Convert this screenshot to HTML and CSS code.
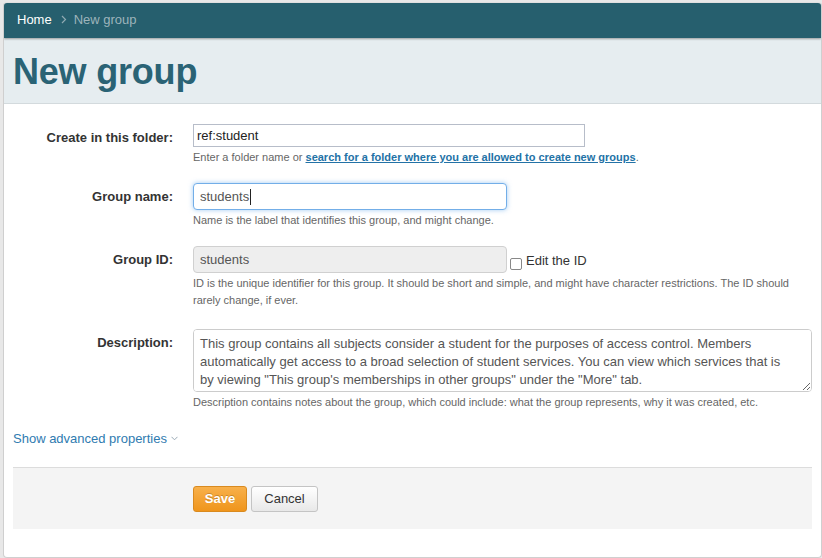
FILE: index.html
```html
<!DOCTYPE html>
<html>
<head>
<meta charset="utf-8">
<title>New group</title>
<link rel="stylesheet" href="styles.css">
</head>
<body>
<div class="page">
  <nav class="crumbs">
    <a class="crumb-home" href="#">Home</a>
    <svg class="crumb-sep" width="6" height="9" viewBox="0 0 6 9"><path d="M1 1l3.5 3.5L1 8" fill="none" stroke="#8fa9b2" stroke-width="1.2"/></svg>
    <span class="crumb-current">New group</span>
  </nav>
  <header class="head">
    <h1 class="title">New group</h1>
  </header>
  <form class="form">
    <div class="row">
      <label class="label">Create in this folder:</label>
      <div class="field">
        <input class="input input-folder" type="text" value="ref:student">
        <div class="help">Enter a folder name or <a href="#" class="help-link">search for a folder where you are allowed to create new groups</a>.</div>
      </div>
    </div>
    <div class="row">
      <label class="label">Group name:</label>
      <div class="field">
        <div class="caret-wrap">
          <input class="input input-focus" type="text" value="students">
          <span class="caret"></span>
        </div>
        <div class="help">Name is the label that identifies this group, and might change.</div>
      </div>
    </div>
    <div class="row row-id">
      <label class="label">Group ID:</label>
      <div class="field">
        <div class="id-line">
          <input class="input input-disabled" type="text" value="students" disabled>
          <label class="check"><span class="checkbox"></span>Edit the ID</label>
        </div>
        <div class="help help-wide">ID is the unique identifier for this group. It should be short and simple, and might have character restrictions. The ID should rarely change, if ever.</div>
      </div>
    </div>
    <div class="row">
      <label class="label">Description:</label>
      <div class="field field-full">
        <textarea class="textarea">This group contains all subjects consider a student for the purposes of access control. Members automatically get access to a broad selection of student services. You can view which services that is by viewing "This group's memberships in other groups" under the "More" tab.</textarea>
        <div class="help">Description contains notes about the group, which could include: what the group represents, why it was created, etc.</div>
      </div>
    </div>
    <a href="#" class="advanced">Show advanced properties
      <svg width="7" height="5" viewBox="0 0 7 5"><path d="M0.5 0.8L3.5 3.8 6.5 0.8" fill="none" stroke="#9aaab6" stroke-width="1"/></svg>
    </a>
    <div class="actions">
      <button type="button" class="btn btn-save">Save</button>
      <button type="button" class="btn btn-cancel">Cancel</button>
    </div>
  </form>
</div>
</body>
</html>
```
FILE: styles.css
```css
html, body {
  margin: 0;
  padding: 0;
}
body {
  background: #e8e8e8;
  font-family: "Liberation Sans", Arial, sans-serif;
  color: #333;
  padding: 2px 0 0 3px;
  height: 558px;
  box-sizing: border-box;
  overflow: hidden;
}
.page {
  width: 819px;
  height: 556px;
  box-sizing: border-box;
  background: #fff;
  border: 1px solid #cfcfcf;
  border-top-color: #e0e0e0;
  border-radius: 4px;
  overflow: hidden;
}
.crumbs {
  height: 35px;
  background: #265f6e;
  display: flex;
  align-items: center;
  padding-left: 13px;
  padding-bottom: 2px;
  box-sizing: border-box;
  font-size: 13px;
  box-shadow: 0 1px 2px rgba(0,0,0,0.35);
  position: relative;
}
.crumb-home {
  color: #fff;
  text-decoration: none;
}
.crumb-sep {
  margin: 0 7px 0 9px;
}
.crumb-current {
  color: #9db4bb;
}
.head {
  background: #e6edf0;
  height: 66px;
  border-bottom: 1px solid #d3dadd;
  padding-left: 9px;
  box-sizing: border-box;
  padding-top: 14px;
}
.title {
  margin: 0;
  font-size: 36px;
  font-weight: bold;
  color: #2a6375;
  line-height: 40px;
  letter-spacing: -0.2px;
}
.form {
  padding: 20px 9px 0 9px;
}
.row {
  display: grid;
  grid-template-columns: 160px 1fr;
  column-gap: 20px;
  margin-bottom: 17px;
}
.row-id {
  margin-bottom: 20px;
}
.label {
  text-align: right;
  font-weight: bold;
  font-size: 13px;
  color: #333;
  padding-top: 5px;
  line-height: 17px;
}
.field {
  min-width: 0;
}
.input {
  font-family: "Liberation Sans", Arial, sans-serif;
  font-size: 13px;
  box-sizing: border-box;
  display: block;
  margin: 0;
  outline: none;
}
.input-folder {
  width: 392px;
  height: 23px;
  border: 1px solid #b7bdc9;
  border-radius: 0;
  padding: 0 3px;
  color: #222;
}
.caret-wrap {
  position: relative;
  width: 314px;
}
.caret {
  position: absolute;
  left: 57px;
  top: 6px;
  width: 1px;
  height: 16px;
  background: #222;
}
.input-focus {
  width: 314px;
  height: 27px;
  border: 1px solid #73aee8;
  border-radius: 4px;
  box-shadow: 0 0 5px rgba(102,170,235,0.6);
  padding: 0 6px;
  color: #555;
}
.id-line {
  display: flex;
  align-items: flex-start;
}
.input-disabled {
  width: 314px;
  height: 27px;
  border: 1px solid #d0d0d0;
  border-radius: 4px;
  background: #eee;
  padding: 0 6px;
  color: #555;
  -webkit-text-fill-color: #555;
  opacity: 1;
}
.check {
  display: flex;
  align-items: center;
  font-size: 13px;
  color: #333;
  margin-left: 3px;
  margin-top: 5px;
}
.checkbox {
  width: 10px;
  height: 10px;
  border: 1px solid #888;
  border-radius: 2px;
  background: #fff;
  margin-top: 7px;
  margin-right: 4px;
}
.help {
  font-size: 11px;
  color: #666;
  line-height: 17px;
  margin-top: 2px;
}
.help-link {
  color: #2372a6;
  font-weight: bold;
}
.textarea {
  display: block;
  width: 619px;
  height: 63px;
  box-sizing: border-box;
  border: 1px solid #ccc;
  border-radius: 4px;
  padding: 5px 18px 4px 6px;
  font-family: "Liberation Sans", Arial, sans-serif;
  font-size: 13px;
  line-height: 18px;
  color: #555;
  margin: 0;
  resize: both;
  outline: none;
}
.advanced {
  display: inline-flex;
  align-items: center;
  gap: 4px;
  font-size: 13px;
  color: #2f7bb0;
  text-decoration: none;
  margin-top: 2px;
  line-height: 17px;
}
.actions {
  margin-top: 20px;
  height: 62px;
  box-sizing: border-box;
  background: #f4f4f4;
  border-top: 1px solid #dcdcdc;
  display: flex;
  align-items: center;
  padding-left: 180px;
  gap: 4px;
}
.btn {
  height: 26px;
  font-family: "Liberation Sans", Arial, sans-serif;
  font-size: 13px;
  border-radius: 3px;
  padding: 0;
  cursor: pointer;
}
.btn-save {
  width: 54px;
  color: #fff;
  font-weight: bold;
  background: linear-gradient(#f8b04a, #ef951c);
  border: 1px solid #d98a1f;
  text-shadow: 0 -1px 0 rgba(0,0,0,0.2);
}
.btn-cancel {
  width: 67px;
  color: #333;
  background: linear-gradient(#fff, #e8e8e8);
  border: 1px solid #c4c4c4;
}
```
